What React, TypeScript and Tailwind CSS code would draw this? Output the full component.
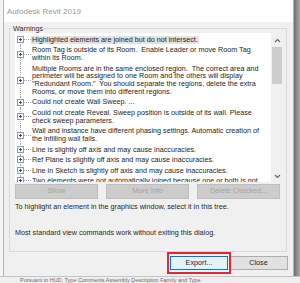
import React from "react";

const items: string[][] = [
  ["Highlighted elements are joined but do not intersect."],
  ["Room Tag is outside of its Room.  Enable Leader or move Room Tag", "within its Room."],
  [
    "Multiple Rooms are in the same enclosed region.  The correct area and",
    "perimeter will be assigned to one Room and the others will display",
    "\"Redundant Room.\"  You should separate the regions, delete the extra",
    "Rooms, or move them into different regions.",
  ],
  ["Could not create Wall Sweep. ..."],
  ["Could not create Reveal. Sweep position is outside of its wall. Please", "check sweep parameters."],
  ["Wall and instance have different phasing settings. Automatic creation of", "the infilling wall fails."],
  ["Line is slightly off axis and may cause inaccuracies."],
  ["Ref Plane is slightly off axis and may cause inaccuracies."],
  ["Line in Sketch is slightly off axis and may cause inaccuracies."],
  ["Two elements were not automatically joined because one or both is not"],
];

function PlusBox() {
  return (
    <svg width="7" height="7" viewBox="0 0 7 7" className="relative block shrink-0">
      <rect x="0.5" y="0.5" width="6" height="6" fill="#fbfcfe" stroke="#8d9ab3" />
      <path d="M2 3.5H5M3.5 2V5" stroke="#3a4d75" strokeWidth="1" />
    </svg>
  );
}

function Chevron({ up }: { up: boolean }) {
  return (
    <svg width="7" height="5" viewBox="0 0 7 5" className="block">
      <path d={up ? "M1 4L3.5 1.5L6 4" : "M1 1L3.5 3.5L6 1"} fill="none" stroke="#606060" strokeWidth="1.1" />
    </svg>
  );
}

export default function App() {
  return (
    <div
      className="w-[300px] h-[283px] overflow-hidden flex flex-col bg-[#f2f2f2]"
      style={{ fontFamily: '"Liberation Sans", Arial, sans-serif' }}
    >
      <div className="flex h-[276px] shrink-0">
        <div className="w-[3px] bg-[#f4f4f4]" />
        <div className="w-[291px] flex flex-col border-l border-r border-[#b4b4b4] bg-[#f0f0f0]">
          {/* Title bar */}
          <div className="h-[22px] shrink-0 bg-white flex items-center pl-[3px] pt-[2px] text-[8px] text-[#999999]">
            Autodesk Revit 2019
          </div>
          {/* Body */}
          <div className="flex-1 flex flex-col">
            <fieldset className="ml-[5px] mr-[6px] mt-[1.5px] h-[228px] border border-[#d9d9d9] px-[5px] pr-[3px] pt-0 pb-0 box-border">
              <legend className="-ml-[3px] px-[1px] text-[7.2px] leading-[9px] text-[#2a2a2a]">Warnings</legend>
              {/* List */}
              <div className="flex h-[148.5px] mt-[0.5px] bg-white overflow-hidden">
                <div className="flex-1 overflow-hidden pt-[1.5px] text-[7.2px] leading-[7.8px] text-[#1e1e1e]">
                  {items.map((lines, i) => (
                    <div key={i} className="flex">
                      <div className="relative w-[16px] shrink-0 flex items-center">
                        <div
                          className={
                            i === 0
                              ? "absolute left-[5px] top-1/2 bottom-0 border-l border-dotted border-[#a6a6a6]"
                              : "absolute left-[5px] top-0 bottom-0 border-l border-dotted border-[#a6a6a6]"
                          }
                        />
                        <div className="ml-[2px]">
                          <PlusBox />
                        </div>
                        <div className="w-[7px] border-t border-dotted border-[#a6a6a6]" />
                      </div>
                      <div className="py-[1.35px]">
                        <div className={i === 0 ? "bg-[#e2e2e2] px-[1px]" : "px-[1px]"}>
                          {lines.map((l, j) => (
                            <div key={j} className="whitespace-pre">
                              {l}
                            </div>
                          ))}
                        </div>
                      </div>
                    </div>
                  ))}
                </div>
                {/* Scrollbar */}
                <div className="w-[12px] shrink-0 bg-[#f0f0f0] flex flex-col items-center">
                  <div className="h-[14px] flex items-center justify-center">
                    <Chevron up />
                  </div>
                  <div className="w-[10px] h-[37px] bg-[#cdcdcd]" />
                  <div className="flex-1" />
                  <div className="h-[10px] flex items-center justify-center">
                    <Chevron up={false} />
                  </div>
                </div>
              </div>
              {/* Buttons */}
              <div className="flex gap-[8px] mt-[2px]">
                {["Show", "More Info", "Delete Checked..."].map((b) => (
                  <div
                    key={b}
                    className="w-[83px] h-[15px] bg-[#cccccc] border border-[#bfbfbf] flex items-center justify-center text-[7.2px] text-[#a3a3a3]"
                  >
                    {b}
                  </div>
                ))}
              </div>
              <div className="mt-[3.7px] text-[7.2px] leading-[9px] text-[#262626] whitespace-nowrap">
                To highlight an element in the graphics window, select it in this tree.
              </div>
              <div className="mt-[17px] text-[7.2px] leading-[9px] text-[#262626] whitespace-nowrap">
                Most standard view commands work without exiting this dialog.
              </div>
            </fieldset>
            {/* Footer buttons */}
            <div className="flex justify-end items-center gap-[1.5px] pr-[5.5px] mt-[4.5px]">
              <div className="relative">
                <div className="w-[58px] h-[14px] bg-[#e5f1fb] border border-[#0078d7] flex items-center justify-center text-[7.2px] text-[#1e1e1e]">
                  Export...
                </div>
                <div className="absolute -left-[3.5px] -right-[3px] -top-[4.3px] -bottom-[4px] border-2 border-[#e3262f]" />
              </div>
              <div className="w-[58px] h-[14px] bg-[#e1e1e1] border border-[#adadad] flex items-center justify-center text-[7.2px] text-[#1e1e1e]">
                Close
              </div>
            </div>
          </div>
        </div>
        <div className="flex-1 bg-[linear-gradient(to_right,#6e6e6e,#aaaaaa)]" />
      </div>
      <div className="flex-1 bg-[#efefef] border-t border-[#c4c4c4] pl-[20px] text-[5.5px] leading-[6px] text-[#6a6a6a] whitespace-nowrap overflow-hidden">
        Pursuant to HUD, Type Comments   Assembly Description   Family and Type
      </div>
    </div>
  );
}
